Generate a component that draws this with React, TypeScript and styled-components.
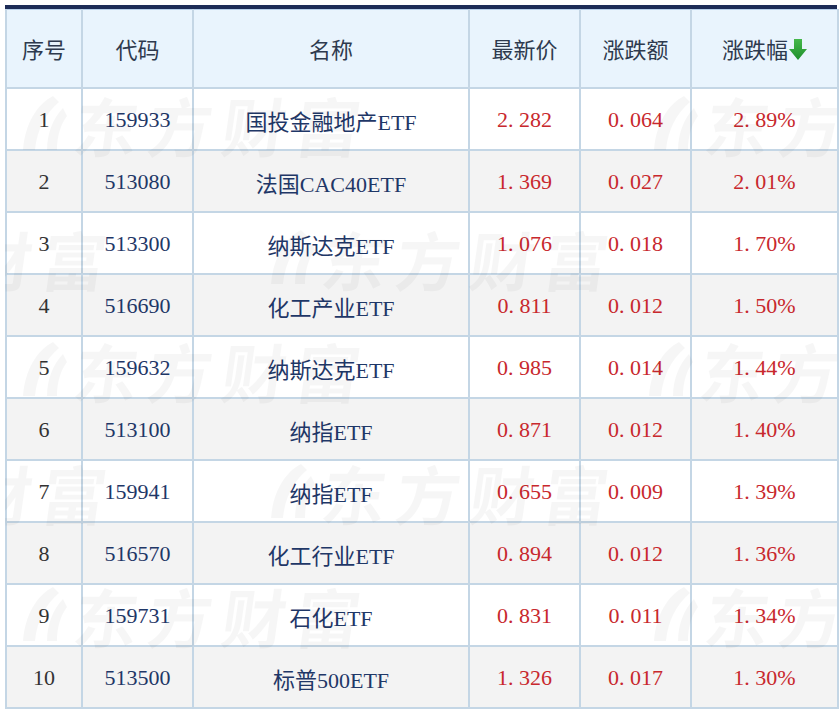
import React from "react";
import styled, { createGlobalStyle } from "styled-components";

const GlobalStyle = createGlobalStyle`
  html, body { margin: 0; padding: 0; background: #ffffff; }
  body { font-family: "Liberation Serif", "Noto Sans CJK SC", serif; }
`;

const Page = styled.div`
  padding: 5px 0 0 5px;
  width: 834px;
`;

const TopBar = styled.div`
  height: 4px;
  background: #1d2c57;
  width: 832px;
`;

const Frame = styled.div`
  position: relative;
  width: 832px;
`;

const Table = styled.table`
  border-collapse: collapse;
  table-layout: fixed;
  width: 832px;
  border: 2px solid #c4d6e5;
  border-top: 1px solid #b7d0ea;
`;

const HeadRow = styled.tr`
  height: 78px;
  background: #e9f4fd;
`;

const Th = styled.th`
  border: 2px solid #c4d6e5;
  border-top: none;
  font-weight: 400;
  font-size: 22px;
  color: #2e3a4e;
  text-align: center;
  padding: 0;
  white-space: nowrap;
`;

const Row = styled.tr<{ $alt: boolean }>`
  height: 62px;
  background: ${(p) => (p.$alt ? "#f3f3f3" : "#ffffff")};
`;

const Td = styled.td<{ $tone: "index" | "navy" | "red" }>`
  border: 2px solid #c4d6e5;
  font-size: 22px;
  text-align: center;
  padding: 2px 0 0;
  white-space: nowrap;
  color: ${(p) =>
    p.$tone === "red" ? "#c8282d" : p.$tone === "navy" ? "#1f3767" : "#333333"};
`;

const Dot = styled.span`
  display: inline-block;
  width: 11px;
  text-align: left;
`;

const SortArrow = styled.svg`
  width: 18px;
  height: 22px;
  vertical-align: -3px;
  margin-left: 1px;
`;

const Watermarks = styled.div`
  position: absolute;
  inset: 0;
  overflow: hidden;
  pointer-events: none;
`;

const Mark = styled.div`
  position: absolute;
  display: flex;
  align-items: center;
  gap: 8px;
  height: 62px;
  white-space: nowrap;
`;

const MarkText = styled.span`
  font-family: "Noto Sans CJK SC", sans-serif;
  font-weight: 700;
  font-size: 64px;
  letter-spacing: 10px;
  color: rgba(0, 0, 0, 0.035);
  transform: skewX(-8deg);
  line-height: 1;
`;

const MarkLogo = styled.svg`
  width: 48px;
  height: 60px;
  flex: none;
`;

type Item = { code: string; name: string; price: string; change: string; pct: string };

const data: Item[] = [
  { code: "159933", name: "国投金融地产ETF", price: "2.282", change: "0.064", pct: "2.89%" },
  { code: "513080", name: "法国CAC40ETF", price: "1.369", change: "0.027", pct: "2.01%" },
  { code: "513300", name: "纳斯达克ETF", price: "1.076", change: "0.018", pct: "1.70%" },
  { code: "516690", name: "化工产业ETF", price: "0.811", change: "0.012", pct: "1.50%" },
  { code: "159632", name: "纳斯达克ETF", price: "0.985", change: "0.014", pct: "1.44%" },
  { code: "513100", name: "纳指ETF", price: "0.871", change: "0.012", pct: "1.40%" },
  { code: "159941", name: "纳指ETF", price: "0.655", change: "0.009", pct: "1.39%" },
  { code: "516570", name: "化工行业ETF", price: "0.894", change: "0.012", pct: "1.36%" },
  { code: "159731", name: "石化ETF", price: "0.831", change: "0.011", pct: "1.34%" },
  { code: "513500", name: "标普500ETF", price: "1.326", change: "0.017", pct: "1.30%" },
];

const marks = [
  { left: 14, top: 84 },
  { left: 645, top: 84 },
  { left: -240, top: 218 },
  { left: 262, top: 218 },
  { left: 14, top: 330 },
  { left: 640, top: 330 },
  { left: -240, top: 452 },
  { left: 262, top: 452 },
  { left: 14, top: 575 },
  { left: 645, top: 575 },
];

function Num({ value }: { value: string }) {
  const i = value.indexOf(".");
  if (i < 0) return <>{value}</>;
  return (
    <>
      {value.slice(0, i)}
      <Dot>.</Dot>
      {value.slice(i + 1)}
    </>
  );
}

export default function App() {
  return (
    <>
      <GlobalStyle />
      <Page>
        <TopBar />
        <Frame>
          <Table>
            <colgroup>
              <col style={{ width: 76 }} />
              <col style={{ width: 111 }} />
              <col style={{ width: 276 }} />
              <col style={{ width: 111 }} />
              <col style={{ width: 111 }} />
              <col style={{ width: 147 }} />
            </colgroup>
            <thead>
              <HeadRow>
                <Th>序号</Th>
                <Th>代码</Th>
                <Th>名称</Th>
                <Th>最新价</Th>
                <Th>涨跌额</Th>
                <Th>
                  涨跌幅
                  <SortArrow viewBox="0 0 18 22">
                    <defs>
                      <linearGradient id="arrowGreen" x1="0" y1="0" x2="0" y2="1">
                        <stop offset="0" stopColor="#45b84b" />
                        <stop offset="1" stopColor="#1f8f2c" />
                      </linearGradient>
                    </defs>
                    <path d="M5 0 H13 V10 H18 L9 21 L0 10 H5 Z" fill="url(#arrowGreen)" />
                  </SortArrow>
                </Th>
              </HeadRow>
            </thead>
            <tbody>
              {data.map((d, idx) => (
                <Row key={idx} $alt={idx % 2 === 1}>
                  <Td $tone="index">{idx + 1}</Td>
                  <Td $tone="navy">{d.code}</Td>
                  <Td $tone="navy">{d.name}</Td>
                  <Td $tone="red"><Num value={d.price} /></Td>
                  <Td $tone="red"><Num value={d.change} /></Td>
                  <Td $tone="red"><Num value={d.pct} /></Td>
                </Row>
              ))}
            </tbody>
          </Table>
          <Watermarks>
            {marks.map((m, i) => (
              <Mark key={i} style={{ left: m.left, top: m.top }}>
                <MarkLogo viewBox="0 0 48 60">
                  <path
                    d="M34 2 C18 10 6 30 4 56 L16 56 C18 36 26 20 40 8 Z M44 14 C34 24 28 40 28 56 L38 56 C38 42 42 30 48 22 Z"
                    fill="rgba(0,0,0,0.035)"
                  />
                </MarkLogo>
                <MarkText>东方财富</MarkText>
              </Mark>
            ))}
          </Watermarks>
        </Frame>
      </Page>
    </>
  );
}
